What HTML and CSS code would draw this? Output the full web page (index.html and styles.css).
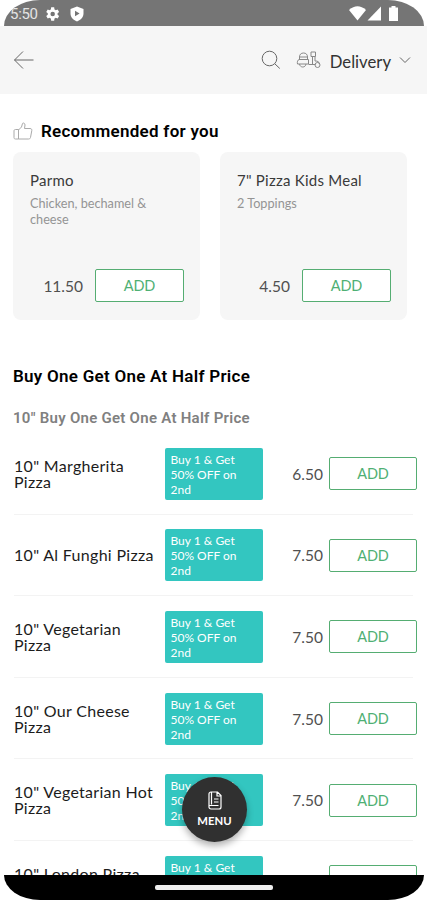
FILE: index.html
```
<!DOCTYPE html>
<html lang="en">
<head>
	<meta charset="UTF-8">
	<title>Menu</title>
	<link rel="stylesheet" href="styles.css">
</head>
<body>
<div class="phone">
	<div class="status-bar">
		<span class="time">5:50</span>
		<svg class="gear" width="18" height="18" viewBox="0 0 24 24"><path fill="#fff" fill-rule="evenodd" d="M19.400 13c.1-.7.1-1.300 0-2l2.100-1.600-2-3.500-2.500 1c-.5-.4-1.100-.7-1.700-1L14.900 3h-4l-.4 2.900c-.6.200-1.200.6-1.700 1l-2.500-1-2 3.500L6.400 11c-.1.700-.1 1.300 0 2l-2.100 1.600 2 3.500 2.500-1c.5.400 1.100.7 1.700 1l.4 2.900h4l.4-2.900c.6-.3 1.200-.6 1.700-1l2.500 1 2-3.500zM12.900 15a3 3 0 1 1 0-6 3 3 0 0 1 0 6z"/></svg>
		<svg class="shield" width="14" height="16" viewBox="0 0 14 16"><path fill="#fff" fill-rule="evenodd" d="M7 .5 13.500 3v4.500c0 3.500-2.500 6.500-6.500 8-4-1.500-6.500-4.500-6.500-8V3zM5 4.800v5.400L9.600 7.500z"/></svg>
		<div class="signals">
			<svg width="17" height="15" viewBox="0 0 17 15"><path fill="#fff" d="M0 4Q8.500-3.500 17 4L8.500 14.500z"/></svg>
			<svg width="15" height="15" viewBox="0 0 15 15"><path fill="#fff" d="M14 .5v14H.5z"/></svg>
			<svg class="battery" width="9" height="15" viewBox="0 0 9 15"><path fill="#fff" d="M2.500 0h4v1.500H9V15H0V1.500h2.500z"/></svg>
		</div>
	</div>
	<header class="header">
		<svg class="back" width="22" height="20" viewBox="0 0 22 20"><path d="M20.500 10H1.500M10 1.500 1.500 10l8.500 8.500"/></svg>
		<svg class="search" width="20" height="20" viewBox="0 0 20 20"><circle cx="8.500" cy="8.500" r="7.300"/><path d="m13.800 13.800 5 4.700"/></svg>
		<svg class="scooter" width="25" height="18" viewBox="0 0 25 18"><path d="M3.500 8.500V6C3.500 3.500 5 2 7.500 2S11.500 3.500 11.500 6v2.500M3 8.500h9.500v4.500H1.500c-.5-2 .2-4 1.500-4.500zM3.500 13c.5 4 6 4 6.500 0M12.500 13.500h7M16.500 13V5.500M15 1h4.500v4.500H15zM19 5.500v4.500c2.500 0 4 .5 4.500 3M3.500 6h8"/><circle cx="21.500" cy="14" r="2.500"/></svg>
		<span class="mode">Delivery</span>
		<svg class="chevron" width="12" height="8" viewBox="0 0 12 8"><path d="m1 1.500 5 5 5-5"/></svg>
	</header>
	<main class="content">
		<h2 class="recommended">
			<svg class="thumb" width="20" height="19" viewBox="0 0 20 19"><path d="M5.500 7.500H2.500C1.500 7.500 1 8 1 9v6.500c0 1 .5 1.500 1.500 1.500h3zM5.500 8l3-3 1-3.500c.5-1 2.500-.5 2.500 1.500l-.5 3.500H17c1.500 0 2 1 1.800 2L17.500 15.500c-.3 1.200-1 1.500-2 1.500h-10"/></svg>
			Recommended for you
		</h2>
		<div class="cards">
			<div class="card">
				<h3>Parmo</h3>
				<p>Chicken, bechamel &amp; cheese</p>
				<div class="card-foot">
					<span class="price">11.50</span>
					<button class="add">ADD</button>
				</div>
			</div>
			<div class="card">
				<h3>7" Pizza Kids Meal</h3>
				<p>2 Toppings</p>
				<div class="card-foot">
					<span class="price">4.50</span>
					<button class="add">ADD</button>
				</div>
			</div>
		</div>
		<h2 class="section-title">Buy One Get One At Half Price</h2>
		<h3 class="sub-title">10" Buy One Get One At Half Price</h3>
		<ul class="list">
			<li class="item">
				<span class="name">10" Margherita Pizza</span>
				<span class="offer">Buy 1 &amp; Get 50% OFF on 2nd</span>
				<span class="price">6.50</span>
				<button class="add">ADD</button>
			</li>
			<li class="item">
				<span class="name">10" Al Funghi Pizza</span>
				<span class="offer">Buy 1 &amp; Get 50% OFF on 2nd</span>
				<span class="price">7.50</span>
				<button class="add">ADD</button>
			</li>
			<li class="item">
				<span class="name">10" Vegetarian Pizza</span>
				<span class="offer">Buy 1 &amp; Get 50% OFF on 2nd</span>
				<span class="price">7.50</span>
				<button class="add">ADD</button>
			</li>
			<li class="item">
				<span class="name">10" Our Cheese Pizza</span>
				<span class="offer">Buy 1 &amp; Get 50% OFF on 2nd</span>
				<span class="price">7.50</span>
				<button class="add">ADD</button>
			</li>
			<li class="item">
				<span class="name">10" Vegetarian Hot Pizza</span>
				<span class="offer">Buy 1 &amp; Get 50% OFF on 2nd</span>
				<span class="price">7.50</span>
				<button class="add">ADD</button>
			</li>
			<li class="item">
				<span class="name tall">10" London Pizza</span>
				<span class="offer">Buy 1 &amp; Get 50% OFF on 2nd</span>
				<span class="price"></span>
				<button class="add">ADD</button>
			</li>
		</ul>
	</main>
	<button class="menu">
		<svg width="14" height="19" viewBox="0 0 14 19"><path d="M3 1h6.500L13 4.500V16c0 1.200-.8 2-2 2H3c-1.200 0-2-.8-2-2V3c0-1.200.8-2 2-2zM3.500 1v12.500M1 14.500h9.500M9 1v4h4M6 8h4.500M6 11h4.500"/></svg>
		MENU
	</button>
	<div class="nav-bar"><span class="handle"></span></div>
</div>
</body>
</html>
```
FILE: styles.css
```
* {
	box-sizing: border-box;
}

body {
	margin: 0;
	background-color: #fff;
	font-family: Lato, sans-serif;
}

h2,
h3,
p,
ul {
	margin: 0;
	padding: 0;
}

svg {
	display: block;
	flex: none;
}

button {
	padding: 0;
	font-family: inherit;
	cursor: pointer;
}

.phone {
	position: relative;
	display: flex;
	flex-direction: column;
	height: 900px;
	overflow: hidden;
}

/* status bar */
.status-bar {
	display: flex;
	flex: none;
	align-items: center;
	height: 26px;
	margin: 0 3px 0 4px;
	padding-left: 6px;
	overflow: hidden;
	color: #e4e4e4;
	border-radius: 36px 36px 0 0 / 26px 26px 0 0;
	background-color: #757575;
}

.time {
	width: 29px;
	margin-top: 1px;
	font-family: Roboto, sans-serif;
	font-size: 15px;
	letter-spacing: -0.3px;
}

.gear {
	margin-left: 4px;
	margin-top: 2px;
}

.shield {
	margin-left: 9px;
	margin-top: 1px;
}

.signals {
	display: flex;
	gap: 1px;
	margin-top: 1px;
	margin-left: auto;
	margin-right: 26px;
}

.battery {
	margin-left: 6px;
}

/* header */
.header {
	display: flex;
	flex: none;
	align-items: center;
	height: 68px;
	padding: 0 16px 0 13px;
	background-color: #f6f6f6;
}

.header svg,
.thumb,
.menu svg {
	fill: none;
	stroke: #666;
	stroke-width: 1;
}

.search {
	margin-left: auto;
}

.scooter {
	margin-left: 15px;
}

.header .scooter {
	stroke: #888;
}

.mode {
	margin: 3px 8px 0 9px;
	color: #333;
	font-size: 16.7px;
	line-height: 20px;
}

/* content */
.content {
	flex: 1;
	min-height: 0;
	overflow: hidden;
}

h2,
.sub-title {
	font-family: Roboto, sans-serif;
	font-weight: 600;
	letter-spacing: 0.27px;
}

.recommended {
	display: flex;
	gap: 8px;
	align-items: center;
	height: 20px;
	margin: 27px 0 0 13px;
	font-size: 17px;
}

.recommended .thumb {
	stroke: #aaa;
}

.cards {
	display: flex;
	gap: 20px;
	margin: 11px 0 0 13px;
}

.card {
	display: flex;
	flex-direction: column;
	width: 187px;
	height: 168px;
	padding: 19px 16px 18px 17px;
	border-radius: 8px;
	background-color: #f6f6f6;
}

.card h3 {
	color: #3a3a3a;
	font-size: 15px;
	font-weight: 400;
	line-height: 18px;
	letter-spacing: 0.25px;
}

.card p {
	width: 130px;
	margin-top: 6px;
	color: #949494;
	font-size: 12.7px;
	line-height: 16px;
}

.card-foot {
	display: flex;
	gap: 12px;
	align-items: center;
	justify-content: flex-end;
	margin-top: auto;
}

.price {
	color: #505050;
	font-size: 15.5px;
}

.add {
	flex: none;
	width: 89px;
	height: 33px;
	color: #4fb074;
	font-size: 14.5px;
	letter-spacing: -0.2px;
	border: 1.5px solid #55ad72;
	border-radius: 2px;
	background-color: #fff;
}

.section-title {
	margin: 46px 0 0 13px;
	font-size: 17px;
	line-height: 20px;
}

.sub-title {
	margin: 22px 0 0 13px;
	color: #808080;
	font-size: 15px;
	line-height: 20px;
}

/* pizza list */
.list {
	margin: 5px 10px 0 14px;
	list-style: none;
}

.item {
	display: flex;
	align-items: center;
	height: 81.6px;
	background: linear-gradient(#f3f3f3, #f3f3f3) left bottom / 399px 1px no-repeat;
}

.name {
	width: 152px;
	padding-right: 8px;
	color: #1c1c1c;
	font-size: 16px;
	line-height: 16px;
	letter-spacing: 0.3px;
}

/* two lines high, the second one is under the bottom bar */
.name.tall {
	height: 32px;
}

.offer {
	width: 98px;
	height: 52px;
	padding: 4px 20px 0 5px;
	color: #fff;
	font-size: 12px;
	line-height: 15px;
	border-radius: 2px;
	background-color: #33c6c0;
}

.item .price {
	width: 60px;
	margin-right: 6px;
	text-align: right;
}

.item .add {
	width: 88px;
}

/* floating menu button */
.menu {
	position: absolute;
	top: 777px;
	left: 182px;
	display: flex;
	flex-direction: column;
	gap: 4px;
	align-items: center;
	justify-content: center;
	width: 65px;
	height: 65px;
	color: #fff;
	font-size: 11.3px;
	font-weight: 700;
	line-height: 14px;
	border: none;
	border-radius: 50%;
	background-color: #303030;
	box-shadow: 0 4px 7px rgba(0, 0, 0, 0.3);
}

.menu svg {
	stroke: #fff;
	stroke-width: 1.2;
}

/* bottom bar */
.nav-bar {
	display: flex;
	flex: none;
	justify-content: center;
	height: 25px;
	margin: 0 3px 0 4px;
	padding-top: 10px;
	border-radius: 0 0 36px 36px / 0 0 25px 25px;
	background-color: #000;
}

.handle {
	width: 118px;
	height: 5px;
	border-radius: 2px;
	background-color: #eee;
}
```
